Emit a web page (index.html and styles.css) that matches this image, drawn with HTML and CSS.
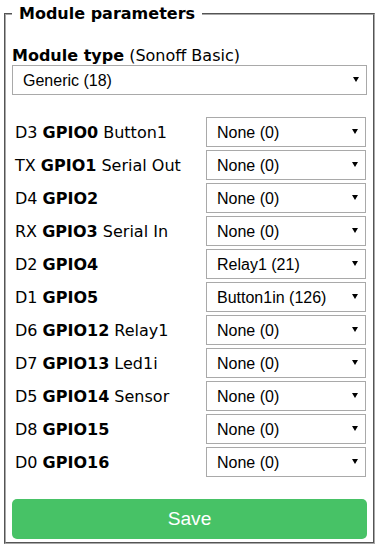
FILE: index.html
```html
<!DOCTYPE html>
<html>
<head>
<meta charset="utf-8">
<link rel="stylesheet" href="styles.css">
</head>
<body>
<fieldset class="panel">
  <legend class="panel-title">Module parameters</legend>
  <div class="mtype"><b>Module type</b> (Sonoff Basic)</div>
  <div class="sel-wrap"><select class="sel"><option>Generic (18)</option></select></div>
  <div class="gpio-list">
    <div class="gpio-row"><span class="gpio-label">D3 <b>GPIO0</b> Button1</span><div class="sel-wrap gpio-sel"><select class="sel"><option>None (0)</option></select></div></div>
    <div class="gpio-row"><span class="gpio-label">TX <b>GPIO1</b> Serial Out</span><div class="sel-wrap gpio-sel"><select class="sel"><option>None (0)</option></select></div></div>
    <div class="gpio-row"><span class="gpio-label">D4 <b>GPIO2</b></span><div class="sel-wrap gpio-sel"><select class="sel"><option>None (0)</option></select></div></div>
    <div class="gpio-row"><span class="gpio-label">RX <b>GPIO3</b> Serial In</span><div class="sel-wrap gpio-sel"><select class="sel"><option>None (0)</option></select></div></div>
    <div class="gpio-row"><span class="gpio-label">D2 <b>GPIO4</b></span><div class="sel-wrap gpio-sel"><select class="sel"><option>Relay1 (21)</option></select></div></div>
    <div class="gpio-row"><span class="gpio-label">D1 <b>GPIO5</b></span><div class="sel-wrap gpio-sel"><select class="sel"><option>Button1in (126)</option></select></div></div>
    <div class="gpio-row"><span class="gpio-label">D6 <b>GPIO12</b> Relay1</span><div class="sel-wrap gpio-sel"><select class="sel"><option>None (0)</option></select></div></div>
    <div class="gpio-row"><span class="gpio-label">D7 <b>GPIO13</b> Led1i</span><div class="sel-wrap gpio-sel"><select class="sel"><option>None (0)</option></select></div></div>
    <div class="gpio-row"><span class="gpio-label">D5 <b>GPIO14</b> Sensor</span><div class="sel-wrap gpio-sel"><select class="sel"><option>None (0)</option></select></div></div>
    <div class="gpio-row"><span class="gpio-label">D8 <b>GPIO15</b></span><div class="sel-wrap gpio-sel"><select class="sel"><option>None (0)</option></select></div></div>
    <div class="gpio-row"><span class="gpio-label">D0 <b>GPIO16</b></span><div class="sel-wrap gpio-sel"><select class="sel"><option>None (0)</option></select></div></div>
  </div>
  <button class="save">Save</button>
</fieldset>
</body>
</html>
```

FILE: styles.css
```css
html, body {
  margin: 0;
  padding: 0;
  background: #fff;
}
body {
  font-family: "DejaVu Sans", Verdana, sans-serif;
  font-size: 16px;
  color: #000;
}
.panel {
  margin: 4px 4px 0 4px;
  padding: 0 6px 3px 6px;
  border: 2px groove #a8a8a8;
  min-width: 0;
}
.panel-title {
  font-weight: bold;
  padding: 0 7px;
  line-height: 19px;
}
.mtype {
  margin-top: 23px;
  line-height: 19px;
  white-space: nowrap;
}
.sel-wrap {
  position: relative;
  height: 30px;
}
.sel-wrap::after {
  content: "";
  position: absolute;
  right: 8px;
  top: 12px;
  width: 0;
  height: 0;
  border-left: 3.5px solid transparent;
  border-right: 3.5px solid transparent;
  border-top: 5px solid #000;
  pointer-events: none;
}
.sel {
  -webkit-appearance: none;
  appearance: none;
  display: block;
  width: 100%;
  height: 30px;
  box-sizing: border-box;
  margin: 0;
  padding: 0 20px 0 10px;
  border: 1px solid #a9a9a9;
  border-radius: 0;
  background: #fff;
  color: #000;
  font-family: "Liberation Sans", Arial, sans-serif;
  font-size: 16px;
}
.gpio-list {
  margin-top: 22px;
  display: flex;
  flex-direction: column;
  gap: 3px;
}
.gpio-row {
  display: flex;
  align-items: center;
  height: 30px;
}
.gpio-label {
  flex: 1;
  padding-left: 3px;
  white-space: nowrap;
  line-height: 19px;
}
.gpio-sel {
  width: 160px;
  margin-right: 1px;
}
.save {
  display: block;
  width: 100%;
  height: 40px;
  margin-top: 22px;
  border: 0;
  border-radius: 5px;
  background: #47c266;
  color: #fff;
  font-family: "Liberation Sans", Arial, sans-serif;
  font-size: 19.2px;
  padding: 0;
}
```
